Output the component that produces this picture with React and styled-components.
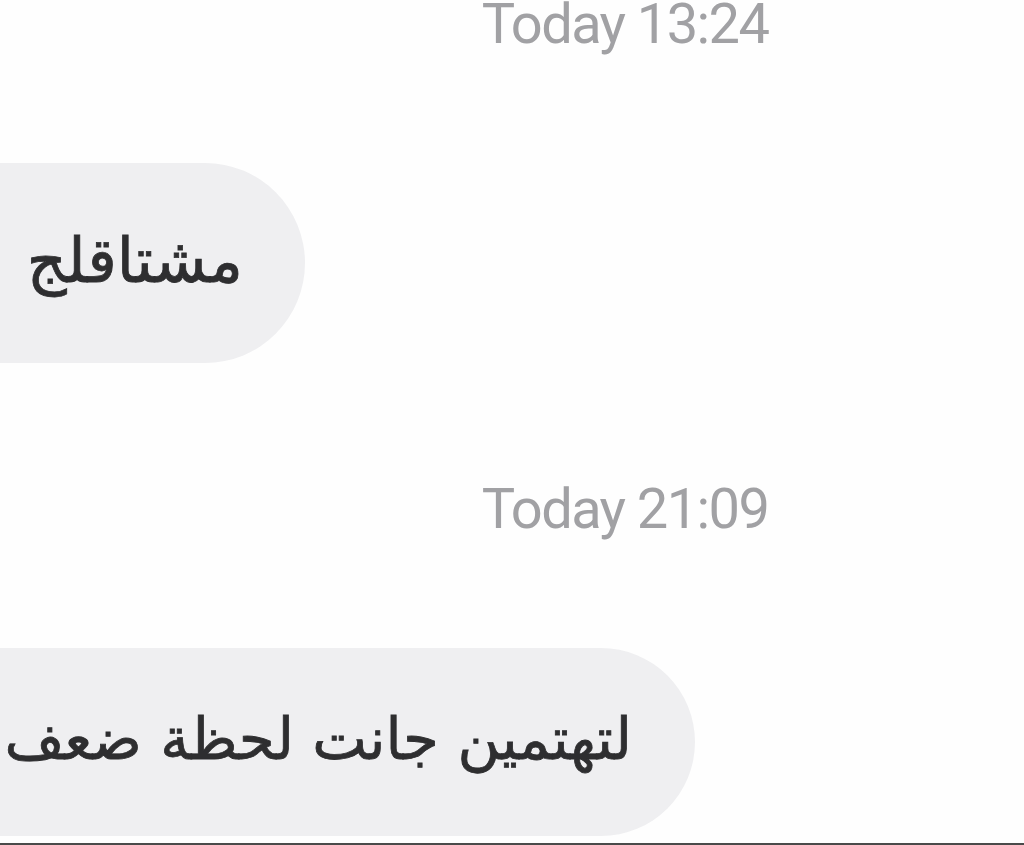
import styled, { createGlobalStyle } from 'styled-components';

const GlobalStyle = createGlobalStyle`
   html, body {
      margin: 0;
      padding: 0;
      background: #ffffff;
   }
`;

const Screen = styled.div`
   width: 1024px;
   height: 845px;
   box-sizing: border-box;
   overflow: hidden;
   display: flex;
   flex-direction: column;
   background: #fefefe;
   border-bottom: 2px solid #4a4a4a;
`;

const Stamp = styled.div`
   display: flex;
   justify-content: center;
   padding-left: 226px;
   margin-top: ${props => props.top};
   font-family: Roboto, 'Liberation Sans', sans-serif;
   font-size: 56px;
   line-height: 56px;
   color: #a1a1a4;
   letter-spacing: -1.6px;
`;

const Bubble = styled.div`
   align-self: flex-start;
   box-sizing: border-box;
   width: ${props => props.width};
   height: ${props => props.height};
   margin-top: ${props => props.top};
   padding-right: ${props => props.pr};
   padding-bottom: 6px;
   display: flex;
   align-items: center;
   direction: rtl;
   overflow: hidden;
   white-space: nowrap;
   background: #efeff1;
   border-radius: 0 100px 100px 0;
   font-family: 'DejaVu Sans', sans-serif;
   font-size: ${props => props.size};
   color: #2e2e30;
   -webkit-text-stroke: 0.8px #2e2e30;
`;

export default function App() {
   return (
      <>
         <GlobalStyle />
         <Screen>
            <Stamp top="-4px">Today 13:24</Stamp>
            <Bubble top="111px" width="305px" height="200px" pr="62px" size="62px">
               مشتاقلج
            </Bubble>
            <Stamp top="118px">Today 21:09</Stamp>
            <Bubble top="111px" width="695px" height="188px" pr="63px" size="58px">
               لتهتمين جانت لحظة ضعف
            </Bubble>
         </Screen>
      </>
   );
}
